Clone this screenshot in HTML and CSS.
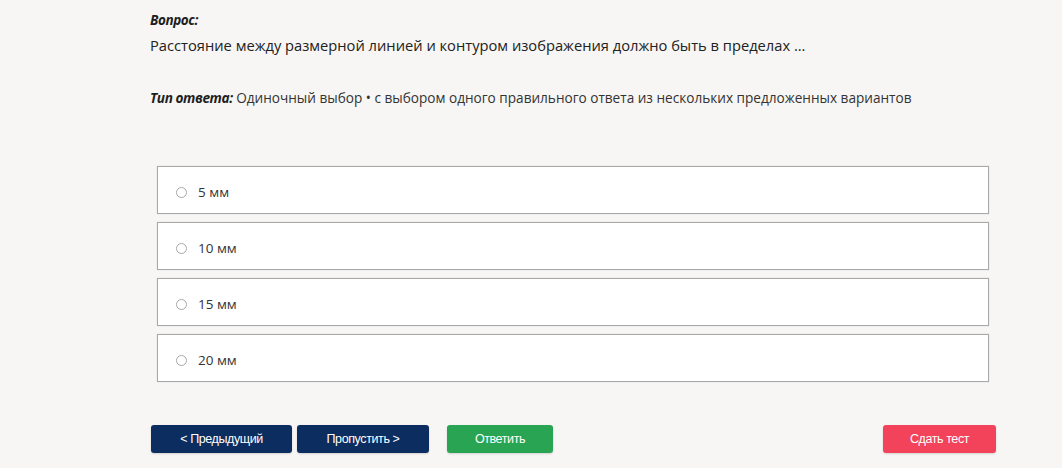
FILE: index.html
```html
<!DOCTYPE html>
<html lang="ru">
<head>
<meta charset="utf-8">
<link rel="stylesheet" href="styles.css">
</head>
<body>
<div class="page">
  <div class="label">Вопрос:</div>
  <div class="question">Расстояние между размерной линией и контуром изображения должно быть в пределах ...</div>
  <div class="type"><span class="label-inline">Тип ответа:</span> Одиночный выбор • с выбором одного правильного ответа из нескольких предложенных вариантов</div>
  <div class="options">
    <label class="option"><span class="radio"></span><span>5 мм</span></label>
    <label class="option"><span class="radio"></span><span>10 мм</span></label>
    <label class="option"><span class="radio"></span><span>15 мм</span></label>
    <label class="option"><span class="radio"></span><span>20 мм</span></label>
  </div>
  <div class="buttons">
    <button class="btn navy prev">&lt; Предыдущий</button>
    <button class="btn navy skip">Пропустить &gt;</button>
    <button class="btn green answer">Ответить</button>
    <span class="spacer"></span>
    <button class="btn red submit">Сдать тест</button>
  </div>
</div>
</body>
</html>
```
FILE: styles.css
```css
html, body {
  margin: 0;
  padding: 0;
  background: #f7f6f4;
}
body {
  font-family: "Open Sans", "Noto Sans", sans-serif;
  color: #222;
  width: 1062px;
  height: 468px;
  overflow: hidden;
}
.page {
  padding: 11px 0 0 150px;
  width: 846px;
}
.label {
  font-weight: 700;
  font-style: italic;
  font-size: 13.5px;
  line-height: 18px;
  letter-spacing: -0.4px;
  color: #1e1e1e;
}
.question {
  margin-top: 6px;
  font-size: 14.7px;
  line-height: 20px;
  color: #222;
}
.type {
  margin-top: 34px;
  font-size: 13.6px;
  line-height: 18px;
  color: #333;
}
.label-inline {
  font-weight: 700;
  font-style: italic;
  letter-spacing: -0.4px;
  color: #1e1e1e;
}
.options {
  margin: 59px 0 0 7px;
  width: 832px;
  display: flex;
  flex-direction: column;
  gap: 8px;
}
.option {
  height: 42px;
  box-sizing: content-box;
  background: #fff;
  border: 1px solid #a9a9a9;
  box-shadow: 0 0 1px #c8c8c8;
  display: flex;
  align-items: center;
  padding: 4px 0 0 18px;
  font-size: 13.5px;
  color: #333;
}
.radio {
  width: 11px;
  height: 11px;
  border: 1.5px solid #a8a8a8;
  border-radius: 50%;
  margin-right: 11px;
  box-sizing: border-box;
}
.buttons {
  margin-top: 43px;
  margin-left: 1px;
  display: flex;
  align-items: center;
}
.btn {
  height: 28px;
  border: none;
  border-radius: 3px;
  color: #fff;
  font-family: "Liberation Sans", Arial, sans-serif;
  font-size: 12.5px;
  letter-spacing: -0.4px;
  padding: 0;
  box-shadow: 0 1px 2px rgba(0,0,0,0.15);
}
.navy { background: #0c2d5f; }
.green { background: #29a452; }
.red { background: #f2435a; }
.prev { width: 141px; }
.skip { width: 132px; margin-left: 5px; }
.answer { width: 106px; margin-left: 18px; }
.spacer { flex: 1; }
.submit { width: 113px; }
```
